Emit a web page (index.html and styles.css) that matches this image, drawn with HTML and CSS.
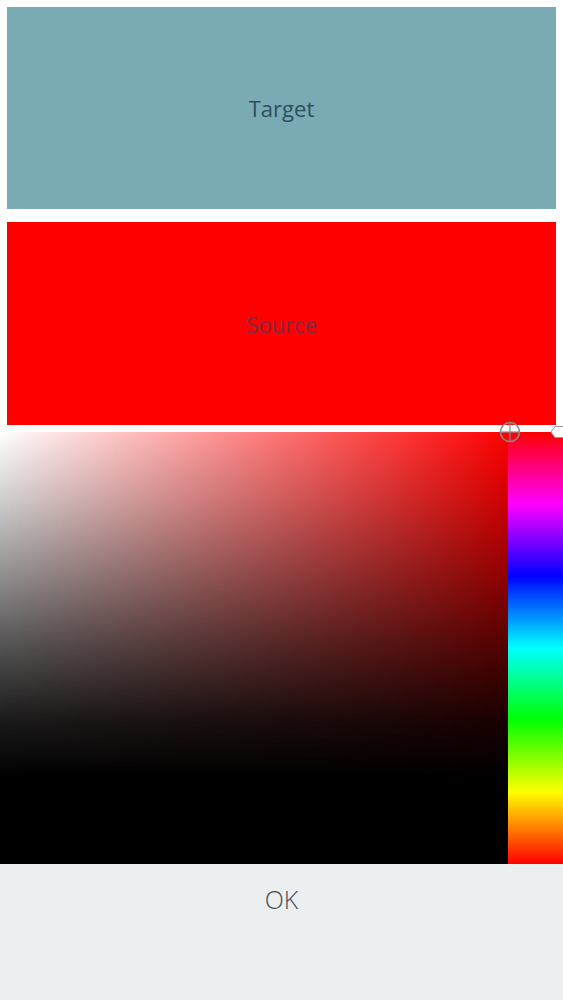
FILE: index.html
```html
<!DOCTYPE html>
<html>
<head>
<meta charset="utf-8">
<link rel="stylesheet" href="styles.css">
</head>
<body>
<div class="page">
  <div class="swatches">
    <div class="swatch target"><span>Target</span></div>
    <div class="swatch source"><span>Source</span></div>
  </div>
  <div class="picker">
    <div class="sv">
      <div class="sv-dark"></div>
    </div>
    <div class="hue"></div>
    <svg class="sv-handle" width="24" height="24" viewBox="0 0 24 24">
      <circle cx="12" cy="12" r="9.5" fill="none" stroke="#8a8a8a" stroke-width="1.6"/>
      <line x1="12" y1="2" x2="12" y2="22" stroke="#8a8a8a" stroke-width="1.2"/>
      <line x1="2" y1="12" x2="22" y2="12" stroke="#8a8a8a" stroke-width="1.2"/>
    </svg>
    <svg class="hue-handle" width="14" height="14" viewBox="0 0 14 14">
      <path d="M5 1.5 H13.5 V12.5 H5 L1 7 Z" fill="#fff" stroke="#9a9a9a" stroke-width="1"/>
    </svg>
  </div>
  <div class="footer">
    <span class="ok">OK</span>
  </div>
</div>
</body>
</html>
```
FILE: styles.css
```css
html, body {
  margin: 0;
  padding: 0;
  background: #ffffff;
}
.page {
  width: 563px;
  height: 1000px;
  display: flex;
  flex-direction: column;
  font-family: "Liberation Sans", Arial, sans-serif;
}
.swatches {
  display: flex;
  flex-direction: column;
  gap: 13px;
  padding: 7px 7px 7px 7px;
}
.swatch {
  height: 202px;
  display: flex;
  align-items: center;
  justify-content: center;
  font-family: "Open Sans", "Liberation Sans", sans-serif;
  font-size: 22px;
}
.target {
  background: #7aaab4;
  color: #2d4f60;
}
.source {
  height: 203px;
  background: #ff0000;
  color: #82294a;
}
.picker {
  position: relative;
  height: 432px;
  display: flex;
}
.sv {
  position: relative;
  width: 508px;
  height: 432px;
  background: linear-gradient(to right, #ffffff 0%, #ff0000 100%);
}
.sv-dark {
  width: 100%;
  height: 100%;
  background: linear-gradient(to bottom,
    rgba(0,0,0,0) 0%,
    rgba(0,0,0,0.18) 15%,
    rgba(0,0,0,0.42) 32%,
    rgba(0,0,0,0.68) 50%,
    rgba(0,0,0,0.9) 67%,
    rgba(0,0,0,1) 80%,
    rgba(0,0,0,1) 100%);
}
.hue {
  flex: 1;
  height: 432px;
  background: linear-gradient(to bottom,
    #ff0000 0%,
    #ff00ff 16.667%,
    #0000ff 33.333%,
    #00ffff 50%,
    #00ff00 66.667%,
    #ffff00 83.333%,
    #ff0000 100%);
}
.sv-handle {
  position: absolute;
  left: 498px;
  top: -12px;
}
.hue-handle {
  position: absolute;
  left: 550px;
  top: -7px;
}
.footer {
  flex: 1;
  background: #ebeff0;
  display: flex;
  justify-content: center;
  padding-top: 21px;
}
.ok {
  font-family: "Open Sans", sans-serif;
  font-weight: 300;
  font-size: 25px;
  color: #4a4d50;
  line-height: 28px;
}
```
